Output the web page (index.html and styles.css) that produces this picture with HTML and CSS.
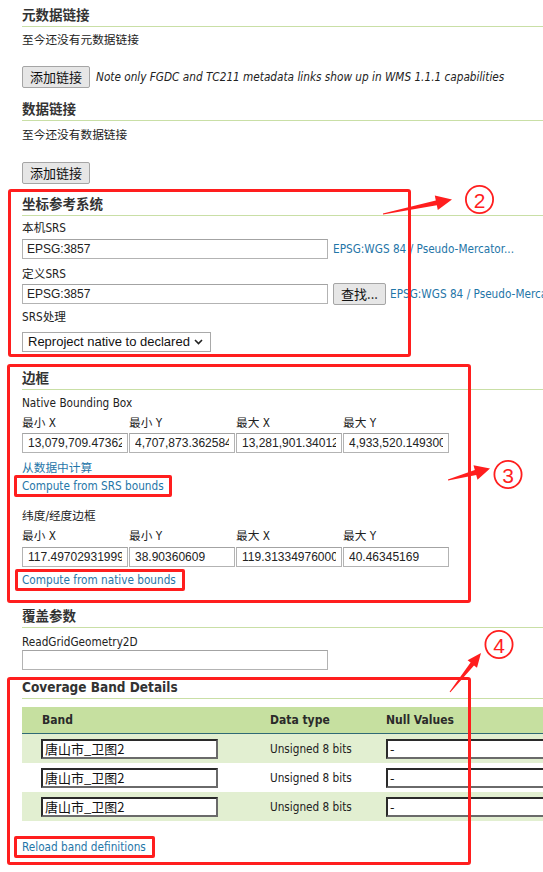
FILE: index.html
```html
<!DOCTYPE html>
<html lang="zh">
<head>
<meta charset="utf-8">
<title>Layer</title>
<link rel="stylesheet" href="styles.css">
</head>
<body>
<div class="page">
  <h3 class="sec">元数据链接</h3>
  <p class="txt gap5">至今还没有元数据链接</p>
  <div class="btnrow gap18">
    <button class="btn">添加链接</button>
    <span class="note">Note only FGDC and TC211 metadata links show up in WMS 1.1.1 capabilities</span>
  </div>

  <h3 class="sec gap13">数据链接</h3>
  <p class="txt gap6">至今还没有数据链接</p>
  <div class="btnrow gap19">
    <button class="btn">添加链接</button>
  </div>

  <section class="anno a2">
    <h3 class="sec">坐标参考系统</h3>
    <p class="txt gap4">本机SRS</p>
    <div class="row gap2">
      <input class="in srs" type="text" value="EPSG:3857">
      <a class="lnk ml5" href="#">EPSG:WGS 84 / Pseudo-Mercator...</a>
    </div>
    <p class="txt gap6">定义SRS</p>
    <div class="row gap1">
      <input class="in srs" type="text" value="EPSG:3857">
      <button class="btn find">查找...</button>
      <a class="lnk ml4 nowrap" href="#">EPSG:WGS 84 / Pseudo-Mercator...</a>
    </div>
    <p class="txt gap4">SRS处理</p>
    <div class="select gap7">
      <span>Reproject native to declared</span>
      <svg class="chev" width="9" height="6" viewBox="0 0 9 6"><path d="M1 1 L4.5 4.5 L8 1" fill="none" stroke="#222" stroke-width="1.6"/></svg>
    </div>
    <div class="redbox"></div>
    <svg class="mk mk2" width="125" height="40" viewBox="375 180 125 40">
      <polygon points="382.9,213.5 435.8,200.4 434.8,195.5 452,199.5 437.8,210.1 436.8,205.2 383.1,214.5" fill="#ff1e1e"/>
      <circle cx="479.5" cy="199.5" r="13.6" fill="none" stroke="#ff1e1e" stroke-width="1.8"/>
      <text x="479.5" y="208" text-anchor="middle" class="num">2</text>
    </svg>
  </section>

  <section class="anno a3">
    <h3 class="sec">边框</h3>
    <p class="txt gap5">Native Bounding Box</p>
    <div class="grid4 gap4">
      <span>最小 X</span><span>最小 Y</span><span>最大 X</span><span>最大 Y</span>
    </div>
    <div class="grid4 gap2">
      <input class="in" type="text" value="13,079,709.4736240000">
      <input class="in" type="text" value="4,707,873.3625840000">
      <input class="in" type="text" value="13,281,901.3401220000">
      <input class="in" type="text" value="4,933,520.1493003000">
    </div>
    <p class="txt gap7"><a class="lnk" href="#">从数据中计算</a></p>
    <p class="txt gap2"><a class="lnk boxed b1" href="#">Compute from SRS bounds</a></p>
    <p class="txt gap14">纬度/经度边框</p>
    <div class="grid4 gap4">
      <span>最小 X</span><span>最小 Y</span><span>最大 X</span><span>最大 Y</span>
    </div>
    <div class="grid4 gap3">
      <input class="in" type="text" value="117.49702931999999">
      <input class="in" type="text" value="38.90360609">
      <input class="in" type="text" value="119.31334976000001">
      <input class="in" type="text" value="40.46345169">
    </div>
    <p class="txt gap5"><a class="lnk boxed b2" href="#">Compute from native bounds</a></p>
    <div class="redbox"></div>
    <svg class="mk mk3" width="90" height="40" viewBox="440 455 90 40">
      <polygon points="447.9,479.5 474.8,470.1 473.5,465.3 490,468.5 477.5,479.7 476.2,474.9 448.1,480.5" fill="#ff1e1e"/>
      <circle cx="508" cy="474.5" r="13.6" fill="none" stroke="#ff1e1e" stroke-width="1.8"/>
      <text x="508" y="483" text-anchor="middle" class="num">3</text>
    </svg>
  </section>

  <h3 class="sec gap20">覆盖参数</h3>
  <p class="txt gap6">ReadGridGeometry2D</p>
  <input class="in srs" type="text" value="">

  <section class="anno a4">
    <h3 class="sec latin">Coverage Band Details</h3>
    <table class="bands">
      <colgroup><col class="cw1"><col class="cw2"><col></colgroup>
      <thead>
        <tr><th class="h1">Band</th><th>Data type</th><th>Null Values</th></tr>
      </thead>
      <tbody>
        <tr class="odd"><td class="d1"><input class="bin" type="text" value="唐山市_卫图2"></td><td>Unsigned 8 bits</td><td><input class="bin nul" type="text" value="-"></td></tr>
        <tr><td class="d1"><input class="bin" type="text" value="唐山市_卫图2"></td><td>Unsigned 8 bits</td><td><input class="bin nul" type="text" value="-"></td></tr>
        <tr class="odd"><td class="d1"><input class="bin" type="text" value="唐山市_卫图2"></td><td>Unsigned 8 bits</td><td><input class="bin nul" type="text" value="-"></td></tr>
      </tbody>
    </table>
    <p class="txt gap18"><a class="lnk boxed b3" href="#">Reload band definitions</a></p>
    <div class="redbox"></div>
    <svg class="mk mk4" width="80" height="75" viewBox="440 625 80 75">
      <polygon points="449.6,691.7 470.6,662.6 467.6,660.3 481,653 477,667.7 474,665.4 450.4,692.3" fill="#ff1e1e"/>
      <circle cx="499" cy="644.5" r="13.6" fill="none" stroke="#ff1e1e" stroke-width="1.8"/>
      <text x="499" y="653" text-anchor="middle" class="num">4</text>
    </svg>
  </section>
</div>
</body>
</html>
```

FILE: styles.css
```css
html {
  overflow: hidden;
  background: #fff;
}

body {
  margin: 0;
  padding: 0;
  font-family: "DejaVu Sans Condensed", "DejaVu Sans", "Noto Sans CJK SC", sans-serif;
  font-stretch: condensed;
  font-size: 11.7px;
  line-height: 16px;
  color: #222;
}

.page {
  padding: 7px 0 30px 22px;
}

.sec {
  margin: 0;
  font-size: 13.5px;
  line-height: 17px;
  font-weight: bold;
  color: #333;
  padding-bottom: 2px;
  border-bottom: 1px solid #c9dfa6;
}

.sec.latin {
  font-size: 13.5px;
}

.txt {
  margin: 0;
  height: 16px;
  white-space: nowrap;
}

.gap1 { margin-top: 1px; }
.gap2 { margin-top: 2px; }
.gap3 { margin-top: 3px; }
.gap4 { margin-top: 4px; }
.gap5 { margin-top: 5px; }
.gap6 { margin-top: 6px; }
.gap7 { margin-top: 7px; }
.gap8 { margin-top: 8px; }
.gap13 { margin-top: 13px; }
.gap14 { margin-top: 14px; }
.gap18 { margin-top: 18px; }
.gap19 { margin-top: 19px; }
.gap20 { margin-top: 20px; }

.btnrow {
  display: flex;
  align-items: center;
  height: 22px;
}

.btn {
  box-sizing: border-box;
  height: 22px;
  padding: 0 7px;
  margin: 0;
  font-family: "Noto Sans CJK SC", sans-serif;
  font-size: 13px;
  line-height: 18px;
  color: #111;
  background: #e6e6e6;
  border: 1px solid #a5a5a5;
  border-radius: 2px;
}

.note {
  margin-left: 6px;
  font-style: italic;
  white-space: nowrap;
}

.row {
  display: flex;
  align-items: center;
  height: 22px;
  white-space: nowrap;
}

.in {
  box-sizing: border-box;
  display: block;
  height: 20px;
  margin: 0;
  padding: 0 4px;
  border: 1px solid #b3b3b3;
  border-top-color: #a3a3a3;
  background: #fff;
  font-family: "Liberation Sans", Arial, sans-serif;
  font-size: 12px;
  color: #222;
  outline: none;
}

.srs {
  width: 306px;
  flex: none;
}

.find {
  width: 53px;
  padding: 0;
  margin-left: 5px;
  flex: none;
}

.lnk {
  color: #1f76a8;
  text-decoration: none;
  white-space: nowrap;
}

.ml5 { margin-left: 5px; }
.ml4 { margin-left: 4px; }

.select {
  box-sizing: border-box;
  width: 189px;
  height: 20px;
  display: flex;
  align-items: center;
  justify-content: space-between;
  padding: 0 7px 0 5px;
  border: 1px solid #a9a9a9;
  font-family: "Liberation Sans", Arial, sans-serif;
  font-size: 13px;
  color: #111;
}

.grid4 {
  display: grid;
  grid-template-columns: repeat(4, 106px);
  column-gap: 1px;
  white-space: nowrap;
}

.grid4 .in {
  width: 100%;
  padding: 0 5px;
}

.anno {
  position: relative;
}

.a2 { margin-top: 12px; }
.a3 { margin-top: 18px; }
.a4 { margin-top: 9px; }

.redbox {
  position: absolute;
  box-sizing: border-box;
  border: 3px solid #ff1e1e;
  border-radius: 3px;
  pointer-events: none;
}

.a2 .redbox { left: -14px; top: -7px; width: 403px; height: 168px; }
.a3 .redbox { left: -15px; top: -6px; width: 464px; height: 239px; }
.a4 .redbox { left: -15px; top: -2px; width: 464px; height: 188px; }

.boxed {
  position: relative;
  display: inline-block;
}

.boxed::after {
  content: "";
  position: absolute;
  left: -8px;
  right: -8px;
  top: -3px;
  bottom: -3px;
  border: 3px solid #ff1e1e;
  border-radius: 2px;
}

.b2::after { left: -7px; right: -9px; }
.b3::after { right: -9px; }

.mk {
  position: absolute;
  overflow: visible;
}

.mk2 { left: 353px; top: -16px; }
.mk3 { left: 418px; top: 85px; }
.mk4 { left: 418px; top: -54px; }

.num {
  font-family: "Liberation Sans", Arial, sans-serif;
  font-size: 21px;
  fill: #ff1e1e;
}

.bands {
  border-collapse: collapse;
  table-layout: fixed;
  width: 600px;
  margin-top: 8px;
}

.cw1 { width: 248px; }
.cw2 { width: 116px; }

.bands th {
  height: 26px;
  padding: 0;
  text-align: left;
  font-weight: bold;
  font-size: 12px;
  color: #2a2a2a;
  background: #c6e0a0;
  border-bottom: 1px solid #2f6a74;
}

.bands th.h1 {
  padding-left: 20px;
}

.bands td {
  height: 29px;
  padding: 0;
  white-space: nowrap;
}

.bands td.d1 {
  padding-left: 19px;
}

.bands tr.odd td {
  background: #e2efd1;
}

.bin {
  box-sizing: border-box;
  display: block;
  width: 177px;
  height: 20px;
  margin: 0;
  padding: 0 2px;
  border: 2px solid #2a2a2a;
  border-right-color: #6a6a6a;
  border-bottom-color: #6a6a6a;
  background: #fff;
  font-family: "Noto Sans CJK SC", sans-serif;
  font-size: 13px;
  line-height: 16px;
  color: #111;
  outline: none;
}

.bin.nul {
  width: 220px;
}
```
